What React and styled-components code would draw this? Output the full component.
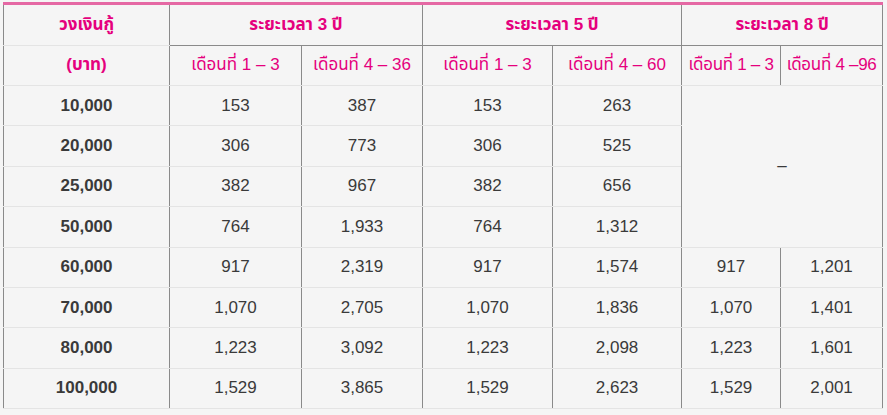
import React from "react";
import styled, { createGlobalStyle } from "styled-components";

const Global = createGlobalStyle`
  html, body { margin: 0; padding: 0; background: #f5f5f5; }
  body { font-family: "Liberation Sans", "Noto Sans Thai", "Noto Sans", Arial, sans-serif; }
`;

const Wrap = styled.div`
  padding: 2px 5px 0 3px;
`;

const Table = styled.table`
  width: 879px;
  border-collapse: collapse;
  table-layout: fixed;
  border-top: 3px solid #e568a4;
  background: #f5f5f5;
`;

const Th = styled.th`
  color: #e5007d;
  font-weight: ${(p) => (p.$bold ? 700 : 400)};
  font-size: 17px;
  text-align: center;
  padding: 0;
  height: 39.5px;
  border-left: 1px solid #8a8a8a;
  border-right: 1px solid #8a8a8a;
  border-bottom: 1px solid ${(p) => (p.$dark ? "#8a8a8a" : "#e4e4e4")};
  white-space: nowrap;
  letter-spacing: ${(p) => (p.$tight ? "-0.3px" : "0")};
`;

const Td = styled.td`
  color: #3a3a3a;
  font-weight: ${(p) => (p.$bold ? 700 : 400)};
  font-size: 17px;
  text-align: center;
  padding: 0;
  border-left: 1px solid #8a8a8a;
  border-right: 1px solid #8a8a8a;
  border-bottom: 1px solid #e4e4e4;
`;

const Row = styled.tr`
  height: 40.4px;
`;

const rows = [
  ["10,000", "153", "387", "153", "263"],
  ["20,000", "306", "773", "306", "525"],
  ["25,000", "382", "967", "382", "656"],
  ["50,000", "764", "1,933", "764", "1,312"],
  ["60,000", "917", "2,319", "917", "1,574", "917", "1,201"],
  ["70,000", "1,070", "2,705", "1,070", "1,836", "1,070", "1,401"],
  ["80,000", "1,223", "3,092", "1,223", "2,098", "1,223", "1,601"],
  ["100,000", "1,529", "3,865", "1,529", "2,623", "1,529", "2,001"],
];

export default function App() {
  return (
    <Wrap>
      <Global />
      <Table>
        <colgroup>
          <col style={{ width: 166 }} />
          <col style={{ width: 132 }} />
          <col style={{ width: 121 }} />
          <col style={{ width: 130 }} />
          <col style={{ width: 129 }} />
          <col style={{ width: 99 }} />
          <col style={{ width: 102 }} />
        </colgroup>
        <thead>
          <tr>
            <Th $bold>วงเงินกู้</Th>
            <Th $bold $dark colSpan={2}>ระยะเวลา 3 ปี</Th>
            <Th $bold $dark colSpan={2}>ระยะเวลา 5 ปี</Th>
            <Th $bold $dark colSpan={2}>ระยะเวลา 8 ปี</Th>
          </tr>
          <tr>
            <Th $bold>(บาท)</Th>
            <Th>เดือนที่ 1 – 3</Th>
            <Th>เดือนที่ 4 – 36</Th>
            <Th>เดือนที่ 1 – 3</Th>
            <Th>เดือนที่ 4 – 60</Th>
            <Th $tight>เดือนที่ 1 – 3</Th>
            <Th $tight>เดือนที่ 4 –96</Th>
          </tr>
        </thead>
        <tbody>
          {rows.map((r, i) => (
            <Row key={i}>
              <Td $bold>{r[0]}</Td>
              <Td>{r[1]}</Td>
              <Td>{r[2]}</Td>
              <Td>{r[3]}</Td>
              <Td>{r[4]}</Td>
              {i === 0 && (
                <Td colSpan={2} rowSpan={4}>–</Td>
              )}
              {i >= 4 && (
                <>
                  <Td>{r[5]}</Td>
                  <Td>{r[6]}</Td>
                </>
              )}
            </Row>
          ))}
        </tbody>
      </Table>
    </Wrap>
  );
}
